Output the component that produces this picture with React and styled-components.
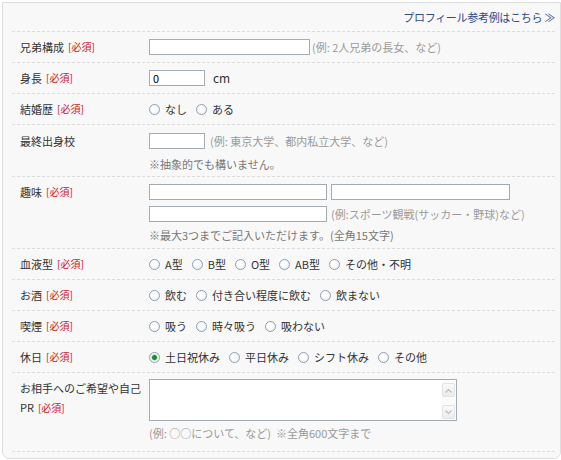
import styled, { createGlobalStyle } from 'styled-components';

const GlobalStyle = createGlobalStyle`
  body {
    margin: 0;
    background: #fff;
    font-family: "Noto Sans CJK JP", "Noto Sans", sans-serif;
    font-size: 11px;
    color: #333;
  }
`;

const Panel = styled.div`
  margin: 2px 0 0 2px;
  height: 457px;
  box-sizing: border-box;
  border: 1px solid #dedede;
  border-radius: 0 0 7px 7px;
  background: #f8f8f8;
  padding: 0 5px 0 9px;
`;

const Header = styled.div`
  height: 28px;
  display: flex;
  align-items: center;
  justify-content: flex-end;
`;

const RefLink = styled.a`
  color: #2c4a8c;
  font-size: 11px;
  text-decoration: none;
  letter-spacing: -0.3px;
`;

const Row = styled.div`
  display: grid;
  grid-template-columns: 137px 1fr;
  align-items: start;
  border-top: 1px dashed #dcdcdc;
  padding: ${(p) => p.$pad || '7px 0'};
`;

const Label = styled.div`
  padding-left: 8px;
  line-height: ${(p) => p.$lh || '16px'};
  height: ${(p) => p.$h || 'auto'};
  color: #333;
`;

const Required = styled.span`
  display: inline-block;
  vertical-align: top;
  line-height: inherit;
  color: #c8161d;
  font-size: 10px;
  margin-left: 4px;
`;

const Field = styled.div`
  display: flex;
  flex-direction: column;
  gap: ${(p) => p.$gap || '6px'};
`;

const Line = styled.div`
  display: flex;
  align-items: center;
  gap: ${(p) => p.$gap || '4px'};
  height: 16px;
`;

const TextInput = styled.input`
  box-sizing: border-box;
  width: ${(p) => p.$w}px;
  height: 16px;
  margin: 0;
  padding: 0 3px;
  border: 1px solid #a3abb3;
  background: #fff;
  font-family: inherit;
  font-size: 11px;
  color: #000;
  outline: none;
`;

const Hint = styled.span`
  display: block;
  color: #9a9a9a;
  font-size: 11px;
  line-height: 16px;
  height: 16px;
`;

const Unit = styled.span`
  margin-left: 2px;
  font-size: 12px;
  line-height: 16px;
  color: #333;
`;

const Note = styled.div`
  color: #777;
  font-size: 11px;
  line-height: 16px;
  height: 16px;
  margin-top: ${(p) => p.$mt || 0}px;
`;

const Radios = styled.div`
  display: flex;
  align-items: center;
  height: 16px;
`;

const RadioItem = styled.label`
  display: inline-flex;
  align-items: center;
  gap: 5px;
  margin-right: 9px;
  color: #333;
  line-height: 16px;
  height: 16px;
`;

const Dot = styled.span`
  box-sizing: border-box;
  width: 11px;
  height: 11px;
  border-radius: 50%;
  border: 1px solid #8e9fb0;
  background: ${(p) =>
    p.$on
      ? 'radial-gradient(circle, #1f8a2a 0 2px, #7fc87f 2.6px, #fff 3.4px, #e6ebef 100%)'
      : 'radial-gradient(circle at 40% 40%, #fff 0 30%, #e4e9ee 100%)'};
`;

const AreaBox = styled.div`
  box-sizing: border-box;
  width: 308px;
  height: 42px;
  display: flex;
  border: 1px solid #a3abb3;
  background: #fff;
`;

const Area = styled.textarea`
  flex: 1;
  border: none;
  resize: none;
  outline: none;
  margin: 0;
  padding: 2px;
  background: transparent;
  font-family: inherit;
  font-size: 11px;
`;

const Scroll = styled.div`
  width: 13px;
  margin-right: 1px;
  display: flex;
  flex-direction: column;
  justify-content: space-between;
  padding: 3px 0 1px;
  background: #fbfbfb;
`;

const Arrow = styled.div`
  height: 12px;
  border: 1px solid #e2e2e2;
  border-radius: 2px;
  background: linear-gradient(#fafafa, #ececec);
  display: flex;
  align-items: center;
  justify-content: center;
`;

function Radio({ label, on }) {
  return (
    <RadioItem>
      <Dot $on={on} />
      {label}
    </RadioItem>
  );
}

function RadioRow({ name, options, checked }) {
  return (
    <Row>
      <Label $h="16px">
        {name}
        <Required>[必須]</Required>
      </Label>
      <Radios>
        {options.map((o) => (
          <Radio key={o} label={o} on={o === checked} />
        ))}
      </Radios>
    </Row>
  );
}

function Chevron({ up }) {
  return (
    <svg width="7" height="5" viewBox="0 0 7 5">
      <path
        d={up ? 'M0.5 4.5 L3.5 1.5 L6.5 4.5' : 'M0.5 0.5 L3.5 3.5 L6.5 0.5'}
        fill="none"
        stroke="#b8bcc0"
        strokeWidth="1.2"
      />
    </svg>
  );
}

export default function App() {
  return (
    <>
      <GlobalStyle />
      <Panel>
        <Header>
          <RefLink href="#">プロフィール参考例はこちら ≫</RefLink>
        </Header>

        <Row>
          <Label $h="16px">
            兄弟構成<Required>[必須]</Required>
          </Label>
          <Line $gap="2px">
            <TextInput $w={161} />
            <Hint>(例: 2人兄弟の長女、など)</Hint>
          </Line>
        </Row>

        <Row>
          <Label $h="16px">
            身長<Required>[必須]</Required>
          </Label>
          <Line $gap="6px">
            <TextInput $w={56} defaultValue="0" />
            <Unit>cm</Unit>
          </Line>
        </Row>

        <RadioRow name="結婚歴" options={['なし', 'ある']} />

        <Row $pad="8px 0 4px">
          <Label $h="16px">最終出身校</Label>
          <Field $gap="7px">
            <Line $gap="5px">
              <TextInput $w={56} />
              <Hint>(例: 東京大学、都内私立大学、など)</Hint>
            </Line>
            <Note>※抽象的でも構いません。</Note>
          </Field>
        </Row>

        <Row $pad="7px 0 5px">
          <Label $h="16px">
            趣味<Required>[必須]</Required>
          </Label>
          <Field $gap="6px">
            <Line>
              <TextInput $w={178} />
              <TextInput $w={179} />
            </Line>
            <Line>
              <TextInput $w={178} />
              <Hint>(例:スポーツ観戦(サッカー・野球)など)</Hint>
            </Line>
            <Note $mt={-1}>※最大3つまでご記入いただけます。(全角15文字)</Note>
          </Field>
        </Row>

        <RadioRow name="血液型" options={['A型', 'B型', 'O型', 'AB型', 'その他・不明']} />
        <RadioRow name="お酒" options={['飲む', '付き合い程度に飲む', '飲まない']} />
        <RadioRow name="喫煙" options={['吸う', '時々吸う', '吸わない']} />
        <RadioRow
          name="休日"
          options={['土日祝休み', '平日休み', 'シフト休み', 'その他']}
          checked="土日祝休み"
        />

        <Row $pad="6px 0 10px">
          <Label $lh="19px">
            お相手へのご希望や自己
            <br />
            PR<Required>[必須]</Required>
          </Label>
          <Field $gap="4px">
            <AreaBox>
              <Area />
              <Scroll>
                <Arrow>
                  <Chevron up />
                </Arrow>
                <Arrow>
                  <Chevron />
                </Arrow>
              </Scroll>
            </AreaBox>
            <Hint>(例: ○○について、など)&nbsp;&nbsp;※全角600文字まで</Hint>
          </Field>
        </Row>
        <Row $pad="0" />
      </Panel>
    </>
  );
}
